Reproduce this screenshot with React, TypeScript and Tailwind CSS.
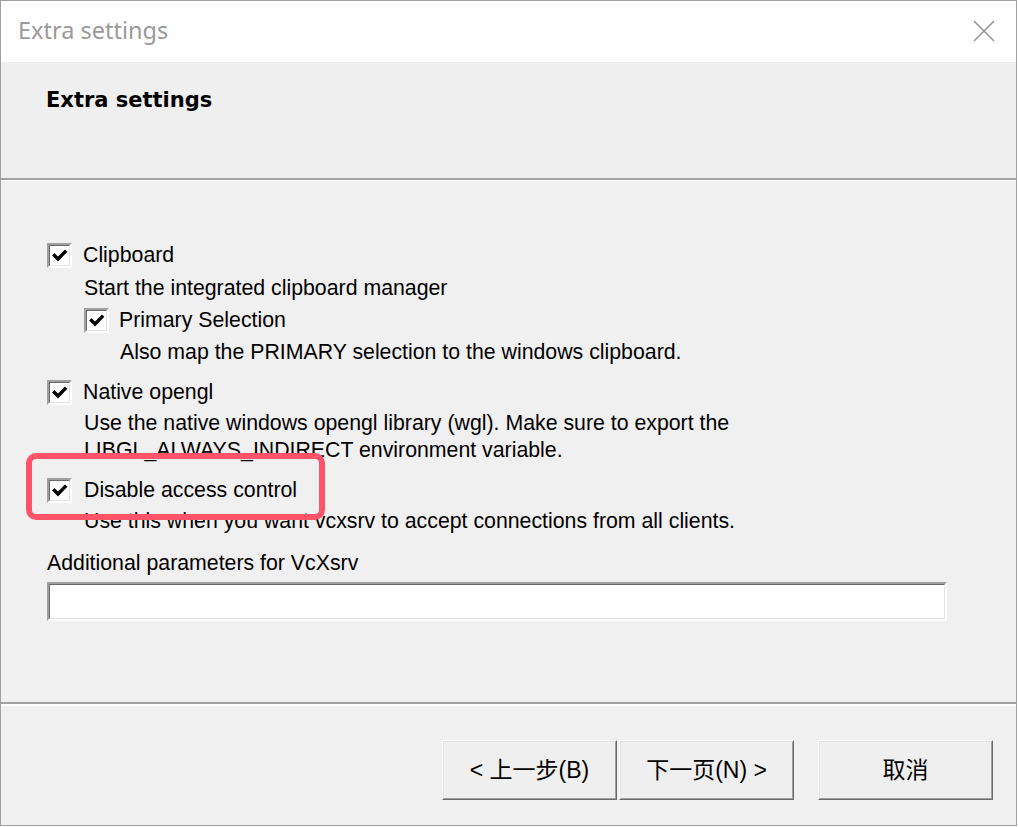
import React from "react";

const SANS = { fontFamily: '"Liberation Sans", Arial, sans-serif' };

function CheckBox() {
  return (
    <div className="w-[25px] h-[25px] shrink-0 border-t-2 border-l-2 border-b-2 border-r-2 border-t-[#a0a0a0] border-l-[#a0a0a0] border-b-white border-r-white">
      <div className="w-full h-full bg-white border-t border-l border-b border-r border-t-[#696969] border-l-[#696969] border-b-[#e3e3e3] border-r-[#e3e3e3] flex items-center justify-center">
        <svg width="16" height="16" viewBox="0 0 16 16">
          <polyline points="2.5,7.5 6,11 13,3.8" fill="none" stroke="#000" strokeWidth="3.4" strokeLinecap="square" />
        </svg>
      </div>
    </div>
  );
}

function Button({ children }: { children: React.ReactNode }) {
  return (
    <div className="w-[175px] h-[60px] border-t border-l border-b border-r border-t-white border-l-white border-b-[#696969] border-r-[#696969]">
      <div className="w-full h-full bg-[#efefef] border-t border-l border-b border-r border-t-[#e3e3e3] border-l-[#e3e3e3] border-b-[#a0a0a0] border-r-[#a0a0a0] flex items-center justify-center text-[23px] text-black"
        style={{ fontFamily: '"Liberation Sans", "Noto Sans CJK SC", sans-serif' }}>
        {children}
      </div>
    </div>
  );
}

export default function App() {
  return (
    <div className="w-[1018px] h-[827px] bg-white">
      <div className="w-[1017px] h-[826px] border border-[#a0a0a0] flex flex-col bg-[#f0f0f0]">
        {/* Title bar */}
        <div className="h-[61px] bg-white flex items-start justify-between shrink-0">
          <div className="pl-[17px] pt-[13px] text-[23.5px] text-[#9a9a9a] leading-[32px]" style={{ fontFamily: '"Noto Sans", "Open Sans", sans-serif' }}>
            Extra settings
          </div>
          <div className="pr-[21px] pt-[19px]">
            <svg width="22" height="22" viewBox="0 0 22 22">
              <line x1="1" y1="1" x2="21" y2="21" stroke="#8f8f8f" strokeWidth="1.4" />
              <line x1="21" y1="1" x2="1" y2="21" stroke="#8f8f8f" strokeWidth="1.4" />
            </svg>
          </div>
        </div>
        {/* Header */}
        <div className="h-[116px] bg-[#efefef] shrink-0 pl-[45px] pt-[24px]">
          <div className="text-[21px] font-bold text-black leading-[28px]" style={{ fontFamily: '"DejaVu Sans", Verdana, sans-serif' }}>
            Extra settings
          </div>
        </div>
        <div className="h-[2px] bg-[#a0a0a0] shrink-0" />
        <div className="h-[1px] bg-white shrink-0" />
        {/* Body */}
        <div className="relative flex-1 flex flex-col pl-[46px] pr-[40px] pt-[62px] text-[21.3px] text-black" style={SANS}>
          <div className="flex items-center h-[25px] gap-[11px]">
            <CheckBox />
            <span>Clipboard</span>
          </div>
          <div className="pl-[37px] mt-[7px] h-[27px] leading-[27px]">Start the integrated clipboard manager</div>
          <div className="pl-[37px] mt-[6px] flex items-center h-[25px] gap-[10px]">
            <CheckBox />
            <span>Primary Selection</span>
          </div>
          <div className="pl-[73px] mt-[6px] h-[27px] leading-[27px]">Also map the PRIMARY selection to the windows clipboard.</div>
          <div className="mt-[14px] flex items-center h-[25px] gap-[11px]">
            <CheckBox />
            <span>Native opengl</span>
          </div>
          <div className="pl-[37px] mt-[5px] leading-[27px] whitespace-nowrap">
            Use the native windows opengl library (wgl). Make sure to export the
            <br />
            LIBGL_ALWAYS_INDIRECT environment variable.
          </div>
          <div className="mt-[14px] flex items-center h-[25px] gap-[12px]">
            <CheckBox />
            <span>Disable access control</span>
          </div>
          <div className="pl-[37px] mt-[5px] h-[27px] leading-[27px] whitespace-nowrap">Use this when you want vcxsrv to accept connections from all clients.</div>
          <div className="mt-[15px] h-[27px] leading-[27px]">Additional parameters for VcXsrv</div>
          <div className="mt-[5px] w-[900px] h-[39px] border-t-2 border-l-2 border-b-2 border-r-2 border-t-[#a0a0a0] border-l-[#a0a0a0] border-b-white border-r-white">
            <div className="w-full h-full bg-white border-t border-l border-b border-r border-t-[#696969] border-l-[#696969] border-b-[#e3e3e3] border-r-[#e3e3e3]" />
          </div>
          {/* highlight overlay */}
          <div className="absolute left-[25px] top-[272px] w-[299px] h-[67px] border-[6px] border-[#ff5468] rounded-[10px] pointer-events-none" />
        </div>
        <div className="h-[2px] bg-[#a0a0a0] shrink-0" />
        <div className="h-[2px] bg-white shrink-0" />
        {/* Footer */}
        <div className="h-[119px] shrink-0 flex items-start justify-end pt-[34px] pr-[23px]">
          <div className="flex gap-[2px]">
            <Button>&lt; 上一步(B)</Button>
            <Button>下一页(N) &gt;</Button>
          </div>
          <div className="ml-[24px]">
            <Button>取消</Button>
          </div>
        </div>
      </div>
    </div>
  );
}
